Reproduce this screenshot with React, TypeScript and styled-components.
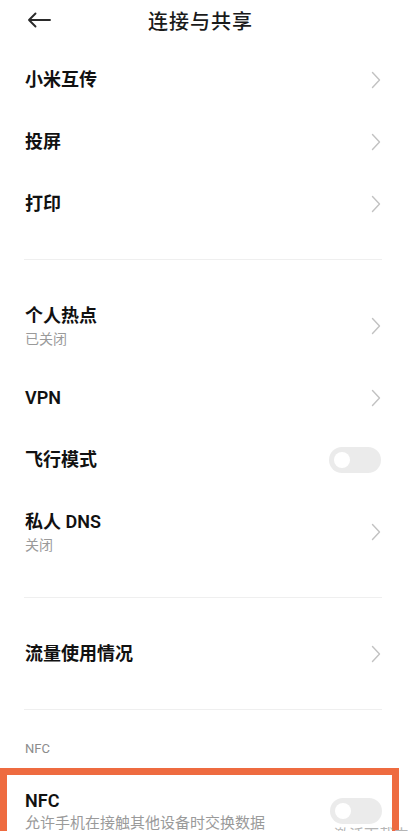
import React from "react";
import styled, { createGlobalStyle } from "styled-components";

type Item = {
  title: string;
  sub?: string;
  toggle?: boolean;
};

const sectionOne: Item[] = [{ title: "小米互传" }, { title: "投屏" }, { title: "打印" }];

const sectionTwo: Item[] = [
  { title: "个人热点", sub: "已关闭" },
  { title: "VPN" },
  { title: "飞行模式", toggle: true },
  { title: "私人 DNS", sub: "关闭" },
];

function Chevron() {
  return (
    <svg width="10" height="18" viewBox="0 0 10 18" fill="none">
      <path d="M1.5 1.5 L8.5 9 L1.5 16.5" stroke="#c2c2c2" strokeWidth="1.4" strokeLinecap="round" strokeLinejoin="round" />
    </svg>
  );
}

function BackArrow() {
  return (
    <svg width="24" height="16" viewBox="0 0 24 16" fill="none">
      <path d="M23 8 H2 M8.5 1.5 L2 8 L8.5 14.5" stroke="#2a2a2a" strokeWidth="1.9" strokeLinecap="round" strokeLinejoin="round" />
    </svg>
  );
}

function SettingRow({ item }: { item: Item }) {
  return (
    <Row $tall={!!item.sub}>
      <TextBlock>
        <Title>{item.title}</Title>
        {item.sub && <Sub>{item.sub}</Sub>}
      </TextBlock>
      {item.toggle ? (
        <Switch>
          <Knob />
        </Switch>
      ) : (
        <Chevron />
      )}
    </Row>
  );
}

export default function App() {
  return (
    <>
      <GlobalStyle />
      <Page>
        <Header>
          <BackArrow />
          <HeaderTitle>连接与共享</HeaderTitle>
        </Header>

        {sectionOne.map((item) => (
          <SettingRow key={item.title} item={item} />
        ))}
        <Divider />
        {sectionTwo.map((item) => (
          <SettingRow key={item.title} item={item} />
        ))}
        <Divider />
        <SettingRow item={{ title: "流量使用情况" }} />
        <Divider />

        <SectionLabel>NFC</SectionLabel>
        <Highlight>
          <NfcRow>
            <TextBlock>
              <Title>NFC</Title>
              <Sub $large>允许手机在接触其他设备时交换数据</Sub>
            </TextBlock>
            <Switch>
              <Knob />
            </Switch>
          </NfcRow>
        </Highlight>

        <Watermark>激活下载中心</Watermark>
      </Page>
    </>
  );
}

const GlobalStyle = createGlobalStyle`
  html, body {
    margin: 0;
    padding: 0;
    background: #ffffff;
  }
  body {
    font-family: Roboto, "Noto Sans CJK SC", sans-serif;
    -webkit-font-smoothing: antialiased;
  }
`;

const Page = styled.div`
  position: relative;
  width: 408px;
  height: 831px;
  overflow: hidden;
  background: #fff;
  color: #111;
`;

const Header = styled.div`
  height: 40px;
  margin-bottom: 9px;
  padding: 0 34px 0 27px;
  display: grid;
  grid-template-columns: 1fr auto 1fr;
  align-items: center;
`;

const HeaderTitle = styled.div`
  font-size: 20px;
  font-weight: 500;
  letter-spacing: 1px;
  color: #1a1a1a;
`;

const Row = styled.div<{ $tall?: boolean }>`
  height: ${(p) => (p.$tall ? 82 : 62)}px;
  padding: 0 27px 0 25px;
  display: flex;
  align-items: center;
  justify-content: space-between;
`;

const TextBlock = styled.div`
  display: flex;
  flex-direction: column;
`;

const Title = styled.div`
  font-size: 18px;
  line-height: 24px;
  font-weight: 600;
  color: #111;
`;

const Sub = styled.div<{ $large?: boolean }>`
  font-size: ${(p) => (p.$large ? 15 : 14)}px;
  line-height: 20px;
  color: #9a9a9a;
  margin-top: ${(p) => (p.$large ? 0 : 1)}px;
`;

const Divider = styled.div`
  height: 1px;
  margin: 24px 26px 25px 24px;
  background: #efefef;
`;

const Switch = styled.div`
  width: 52px;
  height: 26px;
  border-radius: 13px;
  background: #ebebeb;
  display: flex;
  align-items: center;
  padding-left: 5px;
  box-sizing: border-box;
  flex-shrink: 0;
`;

const Knob = styled.div`
  width: 16px;
  height: 16px;
  border-radius: 50%;
  background: #fff;
`;

const SectionLabel = styled.div`
  padding: 5px 25px 0;
  margin-bottom: 10px;
  font-size: 13px;
  line-height: 18px;
  color: #8c8c8c;
`;

const Highlight = styled.div`
  width: 399px;
  box-sizing: border-box;
  border: 7px solid #ee6b40;
  padding: 14px 10px 16px 18px;
`;

const NfcRow = styled.div`
  display: flex;
  align-items: center;
  justify-content: space-between;
`;

const Watermark = styled.div`
  position: absolute;
  left: 334px;
  top: 825px;
  font-size: 15px;
  line-height: 20px;
  color: #b5b5b5;
  white-space: nowrap;
`;
